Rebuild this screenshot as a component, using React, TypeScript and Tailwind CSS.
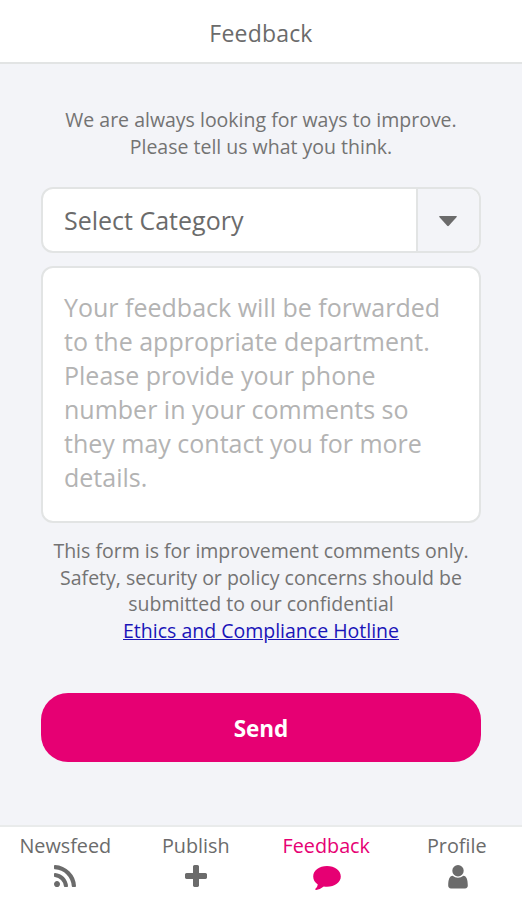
import { useState } from "react";

const tabs = [
  {
    name: "Newsfeed",
    viewBox: "0 128 1408 1408",
    size: "w-[22px] h-[22px]",
    path: "M384 1344q0 80-56 136t-136 56-136-56-56-136 56-136 136-56 136 56 56 136zm512 123q2 28-17 48-18 21-47 21h-135q-25 0-43-16.5t-20-41.5q-22-229-184.5-391.5t-391.5-184.5q-25-2-41.5-20t-16.5-43v-135q0-29 21-47 17-17 43-17h5q160 13 306 80.5t259 181.5q114 113 181.5 259t80.5 306zm512 2q2 27-18 47-18 20-46 20h-143q-26 0-44.5-17.5t-19.5-42.5q-12-215-101-408.5t-231.5-336-336-231.5-408.5-102q-25-1-42.5-19.5t-17.5-43.5v-143q0-28 20-46 18-18 44-18h3q262 13 501.5 120t425.5 294q187 186 294 425.5t120 501.5z",
  },
  {
    name: "Publish",
    viewBox: "0 128 1408 1408",
    size: "w-[22px] h-[22px]",
    path: "M1408 736v192q0 40-28 68t-68 28h-416v416q0 40-28 68t-68 28h-192q-40 0-68-28t-28-68v-416h-416q-40 0-68-28t-28-68v-192q0-40 28-68t68-28h416v-416q0-40 28-68t68-28h192q40 0 68 28t28 68v416h416q40 0 68 28t28 68z",
  },
  {
    name: "Feedback",
    viewBox: "0 0 28 24",
    size: "w-7 h-6 mt-px ml-px",
    path: "M14 0C21.700 0 27.800 4.600 27.800 10.500S21.700 20.800 14 20.800Q12.300 20.800 10.800 20.500Q7.600 23.200 3.200 23.900Q1.800 24 2.400 22.700Q4.600 20.600 4.800 18.400C1.800 16.500.2 13.700.2 10.500.2 4.600 6.300 0 14 0z",
  },
  {
    name: "Profile",
    viewBox: "0 0 20 24",
    size: "w-5 h-6 ml-[2px]",
    path: "M10 0a5.700 5.700 0 0 1 0 11.400A5.700 5.700 0 0 1 10 0zM4.600 10.700Q7 12.700 10 12.700T15.400 10.700C18.600 11 19.800 14.500 19.800 20.600Q19.800 23.400 17 23.400H3Q.2 23.400.2 20.600C.2 14.500 1.400 11 4.600 10.700z",
  },
];

export default function App() {
  const [activeTab, setActiveTab] = useState("Feedback");
  const [message, setMessage] = useState("");

  return (
    <div className="flex h-[900px] w-[522px] flex-col bg-[#f3f4f8] font-['Open_Sans',sans-serif] text-[#6b6b6b]">
      <header className="flex h-16 items-center justify-center border-b-2 border-[#e2e4e4] bg-white pt-1">
        <h1 className="text-[23px] tracking-[0.2px]">Feedback</h1>
      </header>

      <main className="flex flex-1 flex-col px-[41px] pt-[42px]">
        <p className="text-center text-[19.5px] leading-[27px] text-[#737373]">
          We are always looking for ways to improve.
          <br />
          Please tell us what you think.
        </p>

        <button
          type="button"
          className="mt-[27px] flex h-[66px] shrink-0 overflow-hidden rounded-xl border-2 border-[#e2e4e4] bg-white text-left"
        >
          <span className="flex-1 self-center pt-px pl-[21px] text-[25px]">Select Category</span>
          <span className="flex w-[63px] items-center justify-center self-stretch border-l-2 border-[#e2e4e4] bg-[#f3f4f8]">
            <svg viewBox="0 0 18 11" className="mt-[2px] mr-px h-[11px] w-[18px]" fill="currentColor">
              <path d="M.8 0h16.400q1.200 0 .5 1l-7.900 8.800q-.8.800-1.600 0l-7.900-8.800q-.7-1 .5-1z" />
            </svg>
          </span>
        </button>

        <textarea
          value={message}
          onChange={(e) => setMessage(e.target.value)}
          placeholder="Your feedback will be forwarded to the appropriate department. Please provide your phone number in your comments so they may contact you for more details."
          className="mt-[13px] h-[257px] shrink-0 resize-none rounded-xl border-2 border-[#e2e4e4] bg-white px-[21px] pt-[22px] text-[25px] leading-[34px] placeholder-[#b3b3b3] focus:outline-none"
        />

        <p className="mt-[15px] text-center text-[19.5px] leading-[26.7px] text-[#737373]">
          This form is for improvement comments only.
          <br />
          Safety, security or policy concerns should be
          <br />
          submitted to our confidential
          <br />
          <a href="#" className="text-[#1a14b8] underline">
            Ethics and Compliance Hotline
          </a>
        </p>

        <button
          type="button"
          className="mt-[48px] h-[69px] shrink-0 rounded-[27px] bg-[#e60073] pt-[3px] text-[22.5px] font-bold text-white"
        >
          Send
        </button>
      </main>

      <nav className="flex h-[75px] border-t-2 border-[#e9ebeb] bg-white">
        {tabs.map((tab) => (
          <button
            key={tab.name}
            type="button"
            onClick={() => setActiveTab(tab.name)}
            className={`flex flex-1 flex-col items-center pt-[5px] ${activeTab === tab.name ? "text-[#e60073]" : ""}`}
          >
            <span className="text-[19.8px] leading-[28px]">{tab.name}</span>
            <span className="mt-[5px]">
              <svg viewBox={tab.viewBox} className={tab.size} fill="currentColor">
                <path d={tab.path} />
              </svg>
            </span>
          </button>
        ))}
      </nav>
    </div>
  );
}
